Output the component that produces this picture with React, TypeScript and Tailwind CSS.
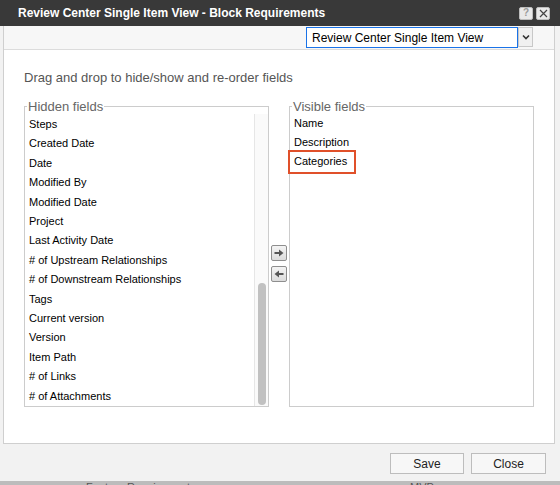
import React from "react";

const HIDDEN_FIELDS = [
  "Steps",
  "Created Date",
  "Date",
  "Modified By",
  "Modified Date",
  "Project",
  "Last Activity Date",
  "# of Upstream Relationships",
  "# of Downstream Relationships",
  "Tags",
  "Current version",
  "Version",
  "Item Path",
  "# of Links",
  "# of Attachments",
];

const VISIBLE_FIELDS = ["Name", "Description", "Categories"];

// Small square button with a filled arrow, used to move fields between lists
function MoveButton({ dir }: { dir: "right" | "left" }) {
  return (
    <button className="w-[16px] h-[16px] flex items-center justify-center border border-[#8e8e8e] rounded-[2px] bg-gradient-to-b from-[#f4f4f4] to-[#dcdcdc]">
      <svg width="10" height="8" viewBox="0 0 10 8" className={dir === "left" ? "rotate-180" : ""}>
        <rect x="0.5" y="3" width="5" height="2" fill="#555" />
        <path d="M5 0.5 L9.5 4 L5 7.5 Z" fill="#555" />
      </svg>
    </button>
  );
}

function TitleButton({ children }: { children: React.ReactNode }) {
  return (
    <div className="w-[14px] h-[13px] rounded-[2px] bg-[#e9e9e9] border border-[#bdbdbd] flex items-center justify-center">
      {children}
    </div>
  );
}

export default function App() {
  return (
    <div className="w-[560px] h-[485px] overflow-hidden flex flex-col bg-[#f2f2f2] font-['Liberation_Sans',Arial,sans-serif]">
      {/* Title bar */}
      <div className="h-[26px] shrink-0 bg-[#393939] flex items-center pl-[18px] pr-[10px]">
        <span className="text-white text-[12px] font-bold leading-none">
          Review Center Single Item View - Block Requirements
        </span>
        <div className="ml-auto flex items-center gap-[3px]">
          <TitleButton>
            <span className="text-[10px] font-bold text-[#9a9a9a] leading-none">?</span>
          </TitleButton>
          <TitleButton>
            <svg width="9" height="9" viewBox="0 0 9 9">
              <path d="M1 1 L8 8 M8 1 L1 8" stroke="#444" strokeWidth="1.2" />
            </svg>
          </TitleButton>
        </div>
      </div>

      {/* Dialog body */}
      <div className="h-[418px] shrink-0 ml-[3px] mr-[5px] border-x border-b border-[#cfcfcf] flex flex-col">
        {/* View selector */}
        <div className="h-[24px] shrink-0 bg-[#f7f7f7] border-b border-[#dcdcdc] flex items-start justify-end pr-[21px]">
          <div className="h-[21px] w-[212px] mt-[1px] border-[1.5px] border-[#1a73e8] bg-white flex items-center pl-[5px] text-[12px] text-black">
            Review Center Single Item View
          </div>
          <div className="h-[20px] w-[15px] mt-[1px] bg-[#f0f0f0] border border-[#c8c8c8] flex items-center justify-center">
            <svg width="8" height="6" viewBox="0 0 8 6">
              <path d="M1 1.5 L4 4.5 L7 1.5" stroke="#333" strokeWidth="1.6" fill="none" />
            </svg>
          </div>
        </div>

        <div className="flex-1 bg-white pl-[20px] pt-[20px]">
          <p className="text-[13px] leading-[16px] text-[#555]">
            Drag and drop to hide/show and re-order fields
          </p>

          <div className="flex mt-[13px]">
            <fieldset className="w-[245px] h-[308px] border border-[#cccccc] flex flex-col">
              <legend className="ml-[2px] px-[1px] text-[13px] leading-[15px] text-[#666]">Hidden fields</legend>
              <div className="flex h-[292px]">
                <ul className="flex-1 pl-[4px] pt-[1px] overflow-hidden">
                  {HIDDEN_FIELDS.map((f) => (
                    <li key={f} className="text-[11px] leading-[19.4px] text-black whitespace-nowrap">
                      {f}
                    </li>
                  ))}
                </ul>
                <div className="w-[14px] h-full bg-[#fafafa] border-l border-[#e6e6e6] flex flex-col justify-end items-center pb-[1px]">
                  <div className="w-[8px] h-[122px] rounded-full bg-[#c1c1c1]" />
                </div>
              </div>
            </fieldset>

            <div className="w-[20px] flex flex-col justify-center items-start pl-[2px] pt-[20px] gap-[5px]">
              <MoveButton dir="right" />
              <MoveButton dir="left" />
            </div>

            <fieldset className="w-[245px] h-[308px] border border-[#cccccc]">
              <legend className="ml-[2px] px-[1px] text-[13px] leading-[15px] text-[#666]">Visible fields</legend>
              <ul className="pl-[4px]">
                {VISIBLE_FIELDS.map((f) => (
                  <li key={f} className="relative text-[11px] leading-[19px] text-black">
                    {f}
                    {f === "Categories" && (
                      <span className="absolute left-[-6px] top-[-2px] w-[68px] h-[24px] border-2 border-[#e0502a]" />
                    )}
                  </li>
                ))}
              </ul>
            </fieldset>
          </div>
        </div>
      </div>

      {/* Footer buttons */}
      <div className="h-[37px] shrink-0 flex items-start justify-end gap-[7px] pt-[9px] pr-[14px]">
        <button className="w-[74px] h-[21px] bg-[#f7f7f7] border border-[#bdbdbd] text-[12px] text-[#222]">Save</button>
        <button className="w-[75px] h-[21px] bg-[#f7f7f7] border border-[#bdbdbd] text-[12px] text-[#222]">Close</button>
      </div>

      {/* Page behind the dialog */}
      <div className="h-[4px] shrink-0 bg-[#bcbcbc] relative overflow-hidden text-[11px] leading-[11px] text-[#555]">
        <span className="absolute left-[86px] top-[1px]">Feature Requirements</span>
        <span className="absolute left-[410px] top-[1px]">MVP</span>
      </div>
    </div>
  );
}
